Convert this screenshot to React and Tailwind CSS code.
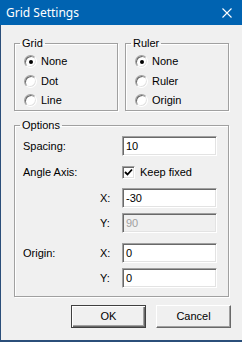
import React from 'react';

const font = "font-['Liberation_Sans',Arial,sans-serif] text-[11px] leading-[13px] text-black";

const Radio = ({ checked, label }) => (
  <div className="flex items-center h-[19.5px]">
    <span className="relative w-[13px] h-[13px] rounded-full bg-white border border-t-[#a0a0a0] border-l-[#a0a0a0] border-b-white border-r-white shadow-[inset_1px_1px_0_#696969,inset_-1px_-1px_0_#e3e3e3] flex items-center justify-center">
      {checked && <span className="w-[4px] h-[4px] rounded-full bg-black" />}
    </span>
    <span className="ml-[4px]">{label}</span>
  </div>
);

const Field = ({ value, disabled }) => (
  <div
    className={`w-[95px] h-[20px] flex items-center pl-[3px] border border-t-[#a0a0a0] border-l-[#a0a0a0] border-b-white border-r-white shadow-[inset_1px_1px_0_#696969,inset_-1px_-1px_0_#e3e3e3] ${
      disabled ? 'bg-[#f0f0f0] text-[#a0a0a0]' : 'bg-white'
    }`}
  >
    {value}
  </div>
);

const Group = ({ title, className, children }) => (
  <fieldset
    className={`border border-[#a0a0a0] shadow-[inset_1px_1px_0_#fff,1px_1px_0_#fff] ${className}`}
  >
    <legend className="ml-[5px] px-[2px]">{title}</legend>
    {children}
  </fieldset>
);

const Row = ({ label, sub, children, className = '' }) => (
  <div className={`grid grid-cols-[77px_22px_95px] items-center h-[20px] ${className}`}>
    <span>{label}</span>
    <span>{sub}</span>
    {children}
  </div>
);

export default function App() {
  return (
    <div className={`w-[242px] h-[342px] bg-[#f0f0f0] ${font}`}>
      {/* title bar */}
      <div className="h-[25px] bg-[#0063b1] flex items-center justify-between pl-[6px] pr-[10px]">
        <span className="font-['Noto_Sans',sans-serif] text-[12px] leading-[16px] text-white">
          Grid Settings
        </span>
        <svg width="10" height="10" viewBox="0 0 10 10">
          <path d="M0.5 0.5 L9.5 9.5 M9.5 0.5 L0.5 9.5" stroke="#fff" strokeWidth="1.1" />
        </svg>
      </div>

      {/* body */}
      <div className="h-[317px] border-l border-b-2 border-l-[#2b4f7a] border-b-[#2b4f7a] pl-[13px] pr-[13px] pt-[12px]">
        <div className="flex gap-[7px]">
          <Group title="Grid" className="w-[104px] h-[74px]">
            <div className="pl-[9px] pt-[2px]">
              <Radio checked label="None" />
              <Radio label="Dot" />
              <Radio label="Line" />
            </div>
          </Group>
          <Group title="Ruler" className="w-[104px] h-[74px]">
            <div className="pl-[9px] pt-[2px]">
              <Radio checked label="None" />
              <Radio label="Ruler" />
              <Radio label="Origin" />
            </div>
          </Group>
        </div>

        <Group title="Options" className="mt-[8px] w-[215px]">
          <div className="pl-[8px] pt-[4px] pb-[8px]">
            <Row label="Spacing:">
              <Field value="10" />
            </Row>
            <Row label="Angle Axis:" className="mt-[6px]">
              <div className="flex items-center">
                <span className="w-[13px] h-[13px] bg-white border border-t-[#a0a0a0] border-l-[#a0a0a0] border-b-white border-r-white shadow-[inset_1px_1px_0_#696969,inset_-1px_-1px_0_#e3e3e3] flex items-center justify-center">
                  <svg width="9" height="9" viewBox="0 0 9 9">
                    <path d="M1 4 L3.5 6.5 L8 1.5" stroke="#000" strokeWidth="1.8" fill="none" />
                  </svg>
                </span>
                <span className="ml-[5px] whitespace-nowrap">Keep fixed</span>
              </div>
            </Row>
            <Row sub="X:" className="mt-[6px]">
              <Field value="-30" />
            </Row>
            <Row sub="Y:" className="mt-[5px]">
              <Field value="90" disabled />
            </Row>
            <Row label="Origin:" sub="X:" className="mt-[10px]">
              <Field value="0" />
            </Row>
            <Row sub="Y:" className="mt-[5px]">
              <Field value="0" />
            </Row>
          </div>
        </Group>

        <div className="mt-[8px] flex justify-end gap-[10px] mr-[-2px]">
          <button className="w-[75px] h-[23px] border border-[#404040] bg-[#f0f0f0] shadow-[inset_1px_1px_0_#fff,inset_-1px_-1px_0_#696969,inset_-2px_-2px_0_#a0a0a0]">
            OK
          </button>
          <button className="w-[75px] h-[23px] border border-t-white border-l-white border-b-[#696969] border-r-[#696969] bg-[#f0f0f0] shadow-[inset_-1px_-1px_0_#a0a0a0]">
            Cancel
          </button>
        </div>
      </div>
    </div>
  );
}
